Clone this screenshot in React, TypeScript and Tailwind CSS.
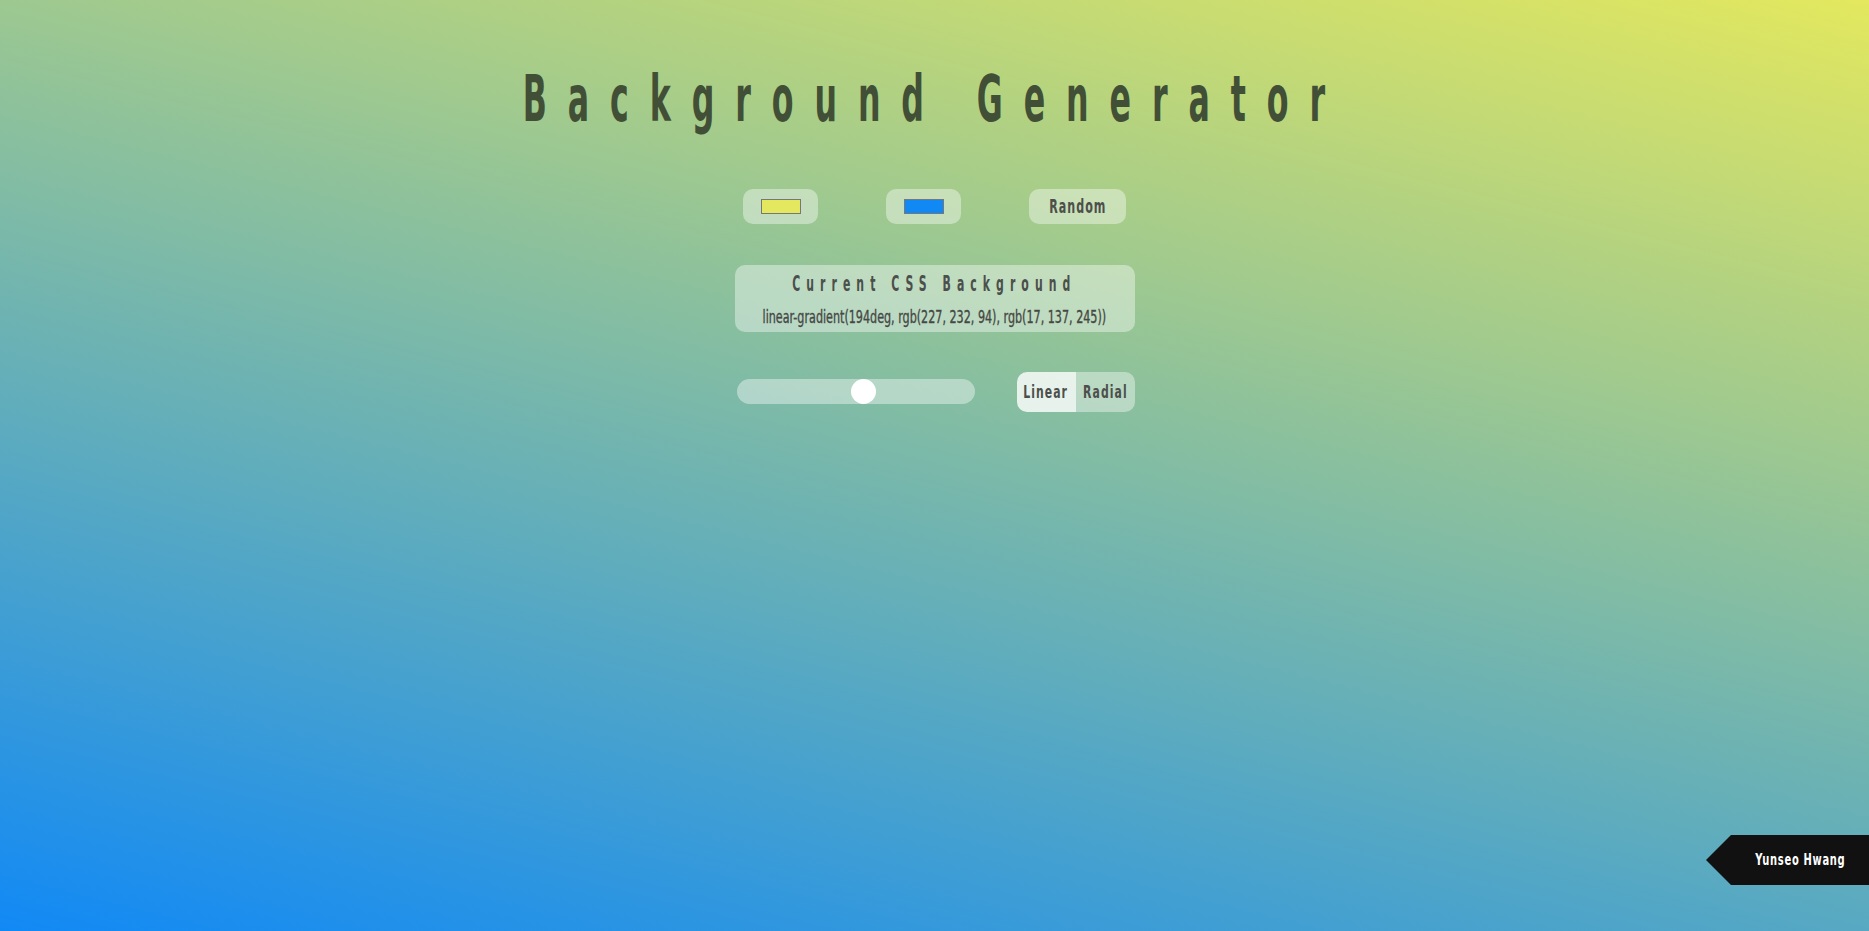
import React from "react";

const FONT = "font-['Liberation_Sans_Narrow','DejaVu_Sans_Condensed','Liberation_Sans',sans-serif]";

export default function App() {
  const angle = 194;
  const thumbLeft = (angle / 360) * (238 - 25);
  return (
    <div
      className={`relative h-screen w-full overflow-hidden bg-[linear-gradient(194deg,rgb(227,232,94),rgb(17,137,245))] ${FONT}`}
    >
      <div className="flex flex-col items-center pt-[67px]">
        <div className="flex h-[64px] w-full justify-center">
          <span className="inline-block scale-x-[0.55] whitespace-nowrap text-[64px] font-bold leading-none tracking-[38px] text-[#424f37]">
            Background Generator
          </span>
        </div>

        <div className="mt-[58px] flex items-center gap-[68px]">
          <div className="flex h-[35px] w-[75px] items-center justify-center rounded-[10px] bg-white/40">
            <div className="h-[15px] w-[40px] border border-[#777777] bg-[#e3e85e]" />
          </div>
          <div className="flex h-[35px] w-[75px] items-center justify-center rounded-[10px] bg-white/40">
            <div className="h-[15px] w-[40px] border border-[#777777] bg-[#1189f5]" />
          </div>
          <div className="flex h-[35px] w-[97px] items-center justify-center rounded-[10px] bg-white/40">
            <span className="inline-block scale-x-[0.65] whitespace-nowrap text-[19px] font-bold leading-none tracking-[1.5px] text-[#4c4f4b]">
              Random
            </span>
          </div>
        </div>

        <div className="mt-[41px] flex h-[67px] w-[400px] flex-col items-center rounded-[10px] bg-white/40 pt-[8px]">
          <div className="flex h-[22px] w-full justify-center">
            <span className="inline-block scale-x-[0.55] whitespace-nowrap text-[22px] font-bold leading-none tracking-[11px] text-[#4c4f4b]">
              Current CSS Background
            </span>
          </div>
          <div className="mt-[14px] flex h-[17px] w-full justify-center">
            <span className="inline-block scale-x-[0.73] whitespace-nowrap text-[17px] leading-none text-[#454845] [-webkit-text-stroke:0.35px_#454845]">
              linear-gradient(194deg, rgb(227, 232, 94), rgb(17, 137, 245))
            </span>
          </div>
        </div>

        <div className="mt-[40px] flex w-[400px] items-center justify-between">
          <div className="relative -mt-[1px] ml-[2px] h-[25px] w-[238px] rounded-full bg-white/40">
            <div
              className="absolute top-0 h-[25px] w-[25px] rounded-full bg-white"
              style={{ left: `${thumbLeft}px` }}
            />
          </div>
          <div className="flex h-[40px] w-[118px] overflow-hidden rounded-[10px]">
            <div className="flex w-[59px] items-center justify-center bg-white/80">
              <span className="inline-block scale-x-[0.71] whitespace-nowrap text-[17px] font-bold leading-none tracking-[1.5px] text-[#4c4f4b]">
                Linear
              </span>
            </div>
            <div className="flex w-[59px] items-center justify-center bg-white/40">
              <span className="inline-block scale-x-[0.71] whitespace-nowrap text-[17px] font-bold leading-none tracking-[1.5px] text-[#4c4f4b]">
                Radial
              </span>
            </div>
          </div>
        </div>
      </div>

      <div className="absolute bottom-[46px] right-0 flex h-[50px] items-center">
        <div className="h-0 w-0 border-y-[25px] border-r-[25px] border-y-transparent border-r-[#111111]" />
        <div className="flex h-[50px] w-[138px] items-center justify-center bg-[#111111]">
          <span className="inline-block scale-x-[0.69] whitespace-nowrap text-[16px] font-bold leading-none tracking-[1px] text-white">
            Yunseo Hwang
          </span>
        </div>
      </div>
    </div>
  );
}
